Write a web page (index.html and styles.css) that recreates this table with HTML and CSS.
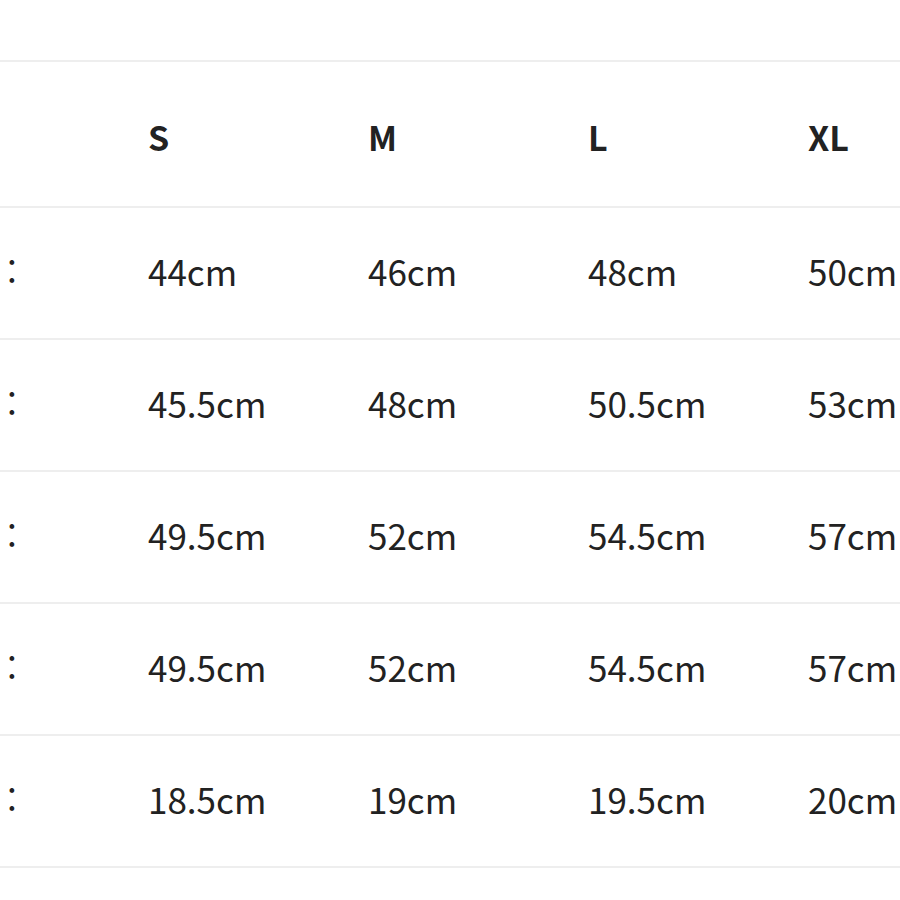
FILE: index.html
```html
<!DOCTYPE html>
<html lang="ko">
<head>
<meta charset="utf-8">
<link rel="stylesheet" href="styles.css">
</head>
<body>
<div class="size-table">
  <div class="row head">
    <div class="cell label"></div>
    <div class="cell">S</div>
    <div class="cell">M</div>
    <div class="cell">L</div>
    <div class="cell">XL</div>
  </div>
  <div class="row">
    <div class="cell label">:</div>
    <div class="cell">44cm</div>
    <div class="cell">46cm</div>
    <div class="cell">48cm</div>
    <div class="cell">50cm</div>
  </div>
  <div class="row">
    <div class="cell label">:</div>
    <div class="cell">45.5cm</div>
    <div class="cell">48cm</div>
    <div class="cell">50.5cm</div>
    <div class="cell">53cm</div>
  </div>
  <div class="row">
    <div class="cell label">:</div>
    <div class="cell">49.5cm</div>
    <div class="cell">52cm</div>
    <div class="cell">54.5cm</div>
    <div class="cell">57cm</div>
  </div>
  <div class="row">
    <div class="cell label">:</div>
    <div class="cell">49.5cm</div>
    <div class="cell">52cm</div>
    <div class="cell">54.5cm</div>
    <div class="cell">57cm</div>
  </div>
  <div class="row">
    <div class="cell label">:</div>
    <div class="cell">18.5cm</div>
    <div class="cell">19cm</div>
    <div class="cell">19.5cm</div>
    <div class="cell">20cm</div>
  </div>
</div>
</body>
</html>
```

FILE: styles.css
```css
html, body {
  margin: 0;
  padding: 0;
  background: #ffffff;
}

body {
  font-family: "Noto Sans CJK KR", "Noto Sans", sans-serif;
  color: #222222;
  overflow: hidden;
  width: 900px;
  height: 900px;
}

.size-table {
  margin-top: 60px;
  border-top: 2px solid #eeeeee;
  width: 900px;
}

.row {
  display: grid;
  grid-template-columns: 148px 220px 220px 220px 92px;
  height: 130px;
  border-bottom: 2px solid #eeeeee;
  align-items: center;
}

.row.head {
  height: 144px;
  font-weight: 700;
}

.cell {
  font-size: 35px;
  line-height: 1;
  white-space: nowrap;
  padding-bottom: 6px;
}

.row.head .cell {
  font-size: 34px;
  padding-top: 6px;
  padding-bottom: 0;
}

.label {
  padding-left: 7px;
}
```
